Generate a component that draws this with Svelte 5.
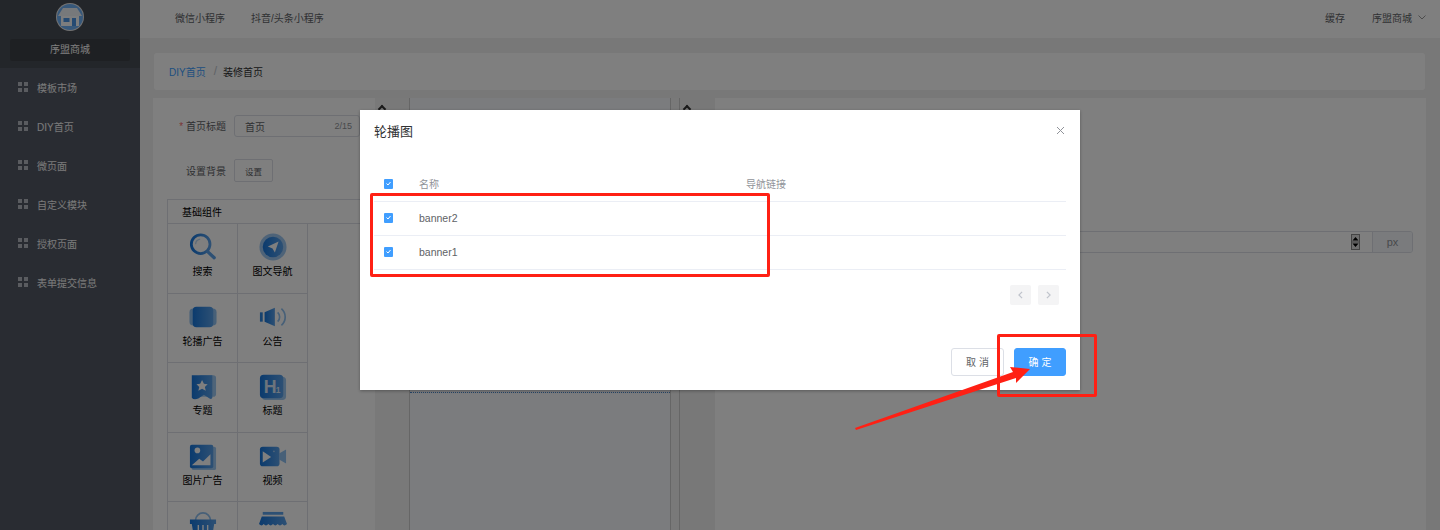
<script>
  // left menu and component grid data
  const menu = ["模板市场", "DIY首页", "微页面", "自定义模块", "授权页面", "表单提交信息"];

  const widgets = [
    { key: "search", name: "搜索" },
    { key: "nav", name: "图文导航" },
    { key: "banner", name: "轮播广告" },
    { key: "notice", name: "公告" },
    { key: "topic", name: "专题" },
    { key: "title", name: "标题" },
    { key: "image", name: "图片广告" },
    { key: "video", name: "视频" },
    // last row runs off the bottom, only the icons show
    { key: "basket", name: "" },
    { key: "shop", name: "" },
  ];

  const rows = ["banner2", "banner1"];
</script>

<svg class="defs" width="0" height="0" aria-hidden="true">
  <defs>
    <linearGradient id="blue" x1="0" y1="0" x2="1" y2="0">
      <stop offset="0" stop-color="#1676dc" />
      <stop offset="1" stop-color="#5aa0e8" />
    </linearGradient>
  </defs>
</svg>

<div class="page">
  <aside class="sidebar">
    <div class="brand">
      <svg class="logo" viewBox="0 0 28 28">
        <circle cx="14" cy="14" r="14" fill="#e6e6e6" />
        <circle cx="14" cy="14" r="13" fill="#6fb0f5" />
        <path d="M7 5h14l5 8H2z" fill="#eef2f7" />
        <path d="M5 13h18v10H5z" fill="#f8fafc" />
        <path d="M7.500 15h6v4h-6z" fill="#4a94e4" />
        <path d="M16 15h4v8h-4z" fill="#4a94e4" />
      </svg>
      <div class="brand-name">序盟商城</div>
    </div>
    <ul class="menu">
      {#each menu as item}
        <li>
          <span class="grid-icon"><i></i><i></i><i></i><i></i></span>
          <span>{item}</span>
        </li>
      {/each}
    </ul>
  </aside>

  <div class="main">
    <header class="topbar">
      <div class="tabs">
        <span>微信小程序</span>
        <span>抖音/头条小程序</span>
      </div>
      <div class="top-right">
        <span>缓存</span>
        <span>序盟商城</span>
        <svg class="chevron" viewBox="0 0 8 5"><path d="M.5.500 4 4 7.500.500" fill="none" stroke="#999" /></svg>
      </div>
    </header>

    <div class="content">
      <div class="crumb">
        <span class="crumb-link">DIY首页</span>
        <span class="crumb-sep">/</span>
        <span>装修首页</span>
      </div>

      <div class="editor">
        <section class="col-left">
          <div class="form-row first">
            <label class="form-label"><em>*</em> 首页标题</label>
            <div class="text-input">
              <span>首页</span>
              <span class="count">2/15</span>
            </div>
          </div>
          <div class="form-row second">
            <label class="form-label">设置背景</label>
            <button class="small-btn">设置</button>
          </div>

          <div class="widgets">
            <div class="widgets-title">基础组件</div>
            <div class="widget-grid">
              {#each widgets as w}
                <div class="widget">
                  <svg class="widget-icon" viewBox="0 0 30 30">
                    {#if w.key === "search"}
                      <circle cx="12.500" cy="12" r="10" fill="none" stroke="url(#blue)" stroke-width="3" />
                      <path d="M20 20l7 6.500" stroke="#5aa0e8" stroke-width="3.500" stroke-linecap="round" />
                      <path d="M7 12a6 6 0 0 1 5-5.500" fill="none" stroke="#bcd9f5" stroke-width="1.500" />
                    {:else if w.key === "nav"}
                      <circle cx="15" cy="15" r="14.500" fill="#5aa0e8" opacity=".6" />
                      <circle cx="15" cy="15" r="11" fill="url(#blue)" />
                      <path d="M21 9l-4 12-2.500-4.500L9.500 14.500z" fill="#fff" />
                    {:else if w.key === "banner"}
                      <rect x="0.500" y="6" width="29" height="18" rx="4" fill="#8fc0f0" />
                      <rect x="4" y="4" width="22" height="22" rx="4" fill="url(#blue)" />
                    {:else if w.key === "notice"}
                      <rect x="1" y="10" width="3" height="10" fill="#2f84dc" />
                      <path d="M6 10l11-5v20L6 20z" fill="url(#blue)" />
                      <path d="M20 10a7 7 0 0 1 0 10M24 6a12 12 0 0 1 0 18" fill="none" stroke="#8fc0f0" stroke-width="1.800" />
                    {:else if w.key === "topic"}
                      <g transform="translate(0 1.500)">
                        <rect x="10" y="2" width="19" height="23" rx="3" fill="#9cc8f2" />
                        <path d="M3 2h22v24q-1 2-3 1l-6-4-6 4q-5 2-7-1z" fill="url(#blue)" />
                        <path d="M14 7l2 4 4 .500-3 3 1 4-4-2-4 2 1-4-3-3 4-.500z" fill="#fff" />
                      </g>
                    {:else if w.key === "title"}
                      <g transform="translate(0 2)">
                        <rect x="3" y="3" width="26" height="25" rx="4" fill="#9cc8f2" />
                        <rect x="1" y="1" width="25" height="25" rx="4" fill="url(#blue)" />
                        <text x="5" y="21" class="h-text">H</text>
                        <text x="18" y="21" class="h-sub">1</text>
                      </g>
                    {:else if w.key === "image"}
                      <g transform="translate(0 2)">
                        <rect x="3" y="3" width="26" height="25" rx="2" fill="#9cc8f2" />
                        <rect x="1" y="1" width="25" height="25" rx="2" fill="url(#blue)" />
                        <circle cx="9" cy="7" r="3" fill="#fff" />
                        <path d="M3 23l8-7 4 3 8-8v12z" fill="#fff" />
                      </g>
                    {:else if w.key === "video"}
                      <path d="M22 12l7-4v15l-7-4z" fill="#8fc0f0" />
                      <rect x="1" y="5" width="21" height="21" rx="3" fill="url(#blue)" />
                      <path d="M4 10l9 6-9 6z" fill="#fff" />
                      <circle cx="16" cy="10" r="1" fill="#9cc6f0" />
                    {:else if w.key === "basket"}
                      <path d="M7 10a8 8 0 0 1 16 0" fill="none" stroke="#8fc0f0" stroke-width="1.800" />
                      <path d="M1 9h28v5h-2l-2 12H5L3 14H1z" fill="url(#blue)" />
                      <path d="M10 15v9M15 15v9M20 15v9" stroke="#fff" stroke-width="1.500" />
                    {:else}
                      <rect x="4" y="1" width="22" height="3" fill="#5aa0e8" />
                      <path d="M3 6h24l3 8q-3 3-5 0-2.500 3-5 0-2.500 3-5 0-2.500 3-5 0-2.500 3-5 0-2 3-5 0z" fill="url(#blue)" />
                    {/if}
                  </svg>
                  {#if w.name}<span>{w.name}</span>{/if}
                </div>
              {/each}
            </div>
          </div>
        </section>

        <div class="handle left-handle"><span class="caret"></span></div>

        <section class="col-center">
          <div class="phone"></div>
        </section>

        <div class="strip"></div>

        <div class="handle right-handle"><span class="caret"></span></div>

        <section class="col-right">
          <div class="px-input">
            <div class="px-field">
              <span class="spin">
                <svg viewBox="0 0 9 16">
                  <rect x="0.500" y="0.500" width="8" height="15" fill="#ddd" stroke="#888" />
                  <path d="M1.500 0.500h6M0.500 8h8" stroke="#888" />
                  <path d="M4.500 3L7.500 6.500h-6zM4.500 13L1.500 9.500h6z" fill="#000" />
                </svg>
              </span>
            </div>
            <div class="px-unit">px</div>
          </div>
        </section>
      </div>
    </div>
  </div>

  <div class="overlay"></div>

  <div class="dialog">
    <div class="dialog-head">
      <span class="dialog-title">轮播图</span>
      <svg class="close" viewBox="0 0 9 9"><path d="M1 1l7 7M8 1L1 8" stroke="#909399" fill="none" /></svg>
    </div>

    <div class="dialog-body">
      <div class="t-row t-head">
        <span class="t-check"><span class="check"><svg viewBox="0 0 9 9"><path d="M2.500 4.500l1.500 1.500 2.500-3" /></svg></span></span>
        <span class="t-name">名称</span>
        <span>导航链接</span>
      </div>
      {#each rows as row}
        <div class="t-row">
          <span class="t-check"><span class="check"><svg viewBox="0 0 9 9"><path d="M2.500 4.500l1.500 1.500 2.500-3" /></svg></span></span>
          <span class="t-name banner-name">{row}</span>
        </div>
      {/each}

      <div class="pager">
        <span class="page-btn"><svg viewBox="0 0 6 10"><path d="M5 1L1 5l4 4" /></svg></span>
        <span class="page-btn"><svg viewBox="0 0 6 10"><path d="M1 1l4 4-4 4" /></svg></span>
      </div>
    </div>

    <div class="dialog-foot">
      <button class="btn">取 消</button>
      <button class="btn primary">确 定</button>
    </div>
  </div>

  <!-- red marks drawn over the screenshot -->
  <div class="mark mark-rows"></div>
  <div class="mark mark-ok"></div>
  <svg class="arrow" viewBox="0 0 1440 530">
    <polygon points="855,428 1013,372 1010,367 1030,369 1016,383 1016,378 856,430" fill="#ff2014" />
  </svg>
</div>

<style>
  :global(body) {
    margin: 0;
    font-family: "Liberation Sans", "Noto Sans CJK SC", sans-serif;
  }
  .defs {
    position: absolute;
  }
  .page {
    position: relative;
    display: flex;
    width: 1440px;
    height: 530px;
    overflow: hidden;
    background: #f0f0f0;
    font-size: 10px;
    color: #606266;
  }
  .sidebar {
    width: 140px;
    flex: none;
    background: #535965;
    color: #fff;
  }
  .brand {
    height: 68px;
    box-sizing: border-box;
    padding: 3px 10px 0;
    background: #474c54;
    display: flex;
    flex-direction: column;
    align-items: center;
  }
  .logo {
    width: 28px;
    height: 28px;
    margin-bottom: 8px;
  }
  .brand-name {
    width: 100%;
    height: 22px;
    line-height: 21px;
    text-align: center;
    background: #3d4146;
    border-radius: 2px;
    color: #fff;
  }
  .menu {
    list-style: none;
    margin: 0;
    padding: 0;
  }
  .menu li {
    height: 39px;
    display: flex;
    align-items: center;
    gap: 9px;
    padding-left: 18px;
    color: #f4f4f4;
  }
  .grid-icon {
    display: grid;
    grid-template-columns: 4px 4px;
    gap: 2px;
    margin-top: -1px;
  }
  .grid-icon i {
    width: 4px;
    height: 4px;
    background: #b4b8c0;
  }
  .main {
    flex: 1;
    min-width: 0;
    display: flex;
    flex-direction: column;
  }
  .topbar {
    height: 38px;
    flex: none;
    box-sizing: border-box;
    background: #fff;
    display: flex;
    justify-content: space-between;
    align-items: center;
    padding: 0 14px 3px 35px;
  }
  .tabs {
    display: flex;
    gap: 26px;
    color: #606266;
  }
  .top-right {
    display: flex;
    align-items: center;
    gap: 27px;
    color: #606266;
  }
  .chevron {
    width: 8px;
    height: 5px;
    margin-left: -21px;
    margin-top: -1px;
  }
  .content {
    flex: 1;
    min-height: 0;
    padding: 15px 14px 0 13px;
  }
  .crumb {
    margin-left: 1px;
    height: 37px;
    box-sizing: border-box;
    margin-right: 1px;
    background: #fff;
    border-radius: 3px;
    display: flex;
    align-items: center;
    padding: 0 0 1px 15px;
    color: #303133;
  }
  .crumb-link {
    color: #409eff;
  }
  .crumb-sep {
    margin: 0 6px 0 8px;
    color: #c0c4cc;
    font-size: 12px;
  }
  .editor {
    margin-top: 8px;
    display: flex;
    height: 440px;
    background: #fff;
  }
  .col-left {
    width: 222px;
    flex: none;
    background: #fff;
    padding-top: 17px;
    box-sizing: border-box;
    overflow: hidden;
  }
  .form-row {
    display: flex;
    align-items: center;
  }
  .form-row.second {
    margin-top: 22px;
  }
  .form-label {
    width: 73px;
    text-align: right;
    margin-right: 8px;
    color: #606266;
    padding-bottom: 1px;
  }
  .form-label em {
    color: #f56c6c;
    font-style: normal;
  }
  .text-input {
    width: 126px;
    height: 22px;
    box-sizing: border-box;
    flex: none;
    border: 1px solid #dcdfe6;
    border-radius: 3px;
    display: flex;
    justify-content: space-between;
    align-items: center;
    padding: 0 7px 0 10px;
    font-size: 10px;
    color: #606266;
  }
  .count {
    color: #909399;
    font-size: 9px;
  }
  .small-btn {
    width: 39px;
    height: 23px;
    padding: 0;
    background: #fff;
    border: 1px solid #dcdfe6;
    border-radius: 2px;
    font: inherit;
    font-size: 8.5px;
    color: #606266;
  }
  .widgets {
    margin: 17px 0 0 14px;
    width: 208px;
    border-top: 1px solid #dcdfe6;
    border-left: 1px solid #dcdfe6;
  }
  .widgets-title {
    height: 23px;
    line-height: 25px;
    padding-left: 14px;
    color: #000;
    border-bottom: 1px solid #dcdfe6;
  }
  .widget-grid {
    display: grid;
    grid-template-columns: 70px 70px;
  }
  .widget {
    height: 69.5px;
    box-sizing: border-box;
    border-right: 1px solid #dcdfe6;
    border-bottom: 1px solid #dcdfe6;
    display: flex;
    flex-direction: column;
    align-items: center;
    padding-top: 9px;
    color: #000;
  }
  .widget-icon {
    width: 28px;
    height: 28px;
    margin-bottom: 2px;
    flex: none;
  }
  .h-text {
    font: 700 19px "Liberation Sans", sans-serif;
    fill: #dbe9f8;
  }
  .h-sub {
    font: 700 9px "Liberation Sans", sans-serif;
    fill: #dbe9f8;
  }
  .handle {
    background: #f2f2f2;
    position: relative;
    width: 35px;
    flex: none;
    box-sizing: border-box;
  }
  .left-handle {
    border-right: 1px solid #ccc;
  }
  .right-handle {
    background: #f0f0f0;
  }
  .caret {
    position: absolute;
    top: 8px;
    left: 4px;
    width: 4px;
    height: 4px;
    border-top: 2px solid #333;
    border-left: 2px solid #333;
    transform: rotate(45deg);
  }
  .strip {
    width: 10px;
    flex: none;
    box-sizing: border-box;
    background: #f2f2f2;
    border-left: 1px solid #ccc;
    border-right: 1px solid #ccc;
  }
  .col-center {
    width: 260px;
    flex: none;
    background: #f6f8fc;
  }
  .phone {
    height: 295px;
    box-sizing: border-box;
    border-bottom: 1px dotted #4a8ad0;
  }
  .col-right {
    flex: 1;
    min-width: 0;
    background: #fff;
    padding: 134px 13px 0 0;
  }
  .px-input {
    display: flex;
    height: 22px;
    margin-top: -1px;
    box-sizing: border-box;
    border: 1px solid #dcdfe6;
    border-radius: 3px;
    overflow: hidden;
  }
  .px-field {
    flex: 1;
    display: flex;
    justify-content: flex-end;
    align-items: center;
    padding-right: 12px;
  }
  .spin svg {
    display: block;
    width: 9px;
    height: 16px;
  }
  .px-unit {
    width: 39px;
    background: #f5f7fa;
    border-left: 1px solid #dcdfe6;
    color: #909399;
    text-align: center;
    line-height: 20px;
    font-size: 11px;
  }
  .overlay {
    position: absolute;
    inset: 0;
    background: rgba(0, 0, 0, 0.5);
  }
  .dialog {
    position: absolute;
    left: 360px;
    top: 110px;
    width: 720px;
    height: 280px;
    box-sizing: border-box;
    background: #fff;
    box-shadow: 0 1px 3px rgba(0, 0, 0, 0.3);
    display: flex;
    flex-direction: column;
  }
  .dialog-head {
    height: 58px;
    flex: none;
    box-sizing: border-box;
    padding: 12px 15px 0 14px;
    display: flex;
    justify-content: space-between;
    align-items: flex-start;
  }
  .dialog-title {
    font-size: 13px;
    line-height: 20px;
    color: #303133;
  }
  .close {
    width: 9px;
    height: 9px;
    margin-top: 4px;
    margin-right: 0;
  }
  .dialog-body {
    flex: 1;
    padding: 0 14px;
  }
  .t-row {
    height: 34px;
    box-sizing: border-box;
    padding-bottom: 2px;
    border-bottom: 1px solid #ebeef5;
    display: flex;
    align-items: center;
    color: #606266;
  }
  .t-head {
    color: #909399;
  }
  .t-check {
    width: 45px;
    padding: 1px 0 0 10px;
    box-sizing: border-box;
    flex: none;
    display: flex;
  }
  .t-name {
    width: 327px;
    flex: none;
  }
  .banner-name {
    font-size: 10.5px;
  }
  .check {
    width: 9px;
    height: 10px;
    background: #409eff;
    border-radius: 1px;
    display: block;
  }
  .check svg {
    display: block;
    fill: none;
    stroke: #fff;
    stroke-width: 1;
  }
  .pager {
    display: flex;
    justify-content: flex-end;
    gap: 7px;
    padding: 15px 7px 0 0;
  }
  .page-btn {
    width: 21px;
    height: 20px;
    background: #f4f4f5;
    border-radius: 2px;
    display: flex;
    align-items: center;
    justify-content: center;
  }
  .page-btn svg {
    width: 5px;
    height: 8px;
    fill: none;
    stroke: #c0c4cc;
    stroke-width: 1.500;
  }
  .dialog-foot {
    flex: none;
    display: flex;
    justify-content: flex-end;
    gap: 10px;
    padding: 0 14px 14px;
  }
  .btn {
    width: 53px;
    height: 28px;
    padding: 0 0 2px;
    box-sizing: border-box;
    background: #fff;
    border: 1px solid #dcdfe6;
    border-radius: 3px;
    font: inherit;
    font-size: 10px;
    color: #606266;
  }
  .btn.primary {
    width: 52px;
    background: #409eff;
    border-color: #409eff;
    color: #fff;
  }
  .mark {
    position: absolute;
    box-sizing: border-box;
    border: 3px solid #ff2014;
    border-radius: 2px;
  }
  .mark-rows {
    left: 370px;
    top: 193px;
    width: 400px;
    height: 84px;
  }
  .mark-ok {
    left: 997px;
    top: 334px;
    width: 100px;
    height: 63px;
  }
  .arrow {
    position: absolute;
    inset: 0;
    width: 1440px;
    height: 530px;
    pointer-events: none;
  }
</style>
